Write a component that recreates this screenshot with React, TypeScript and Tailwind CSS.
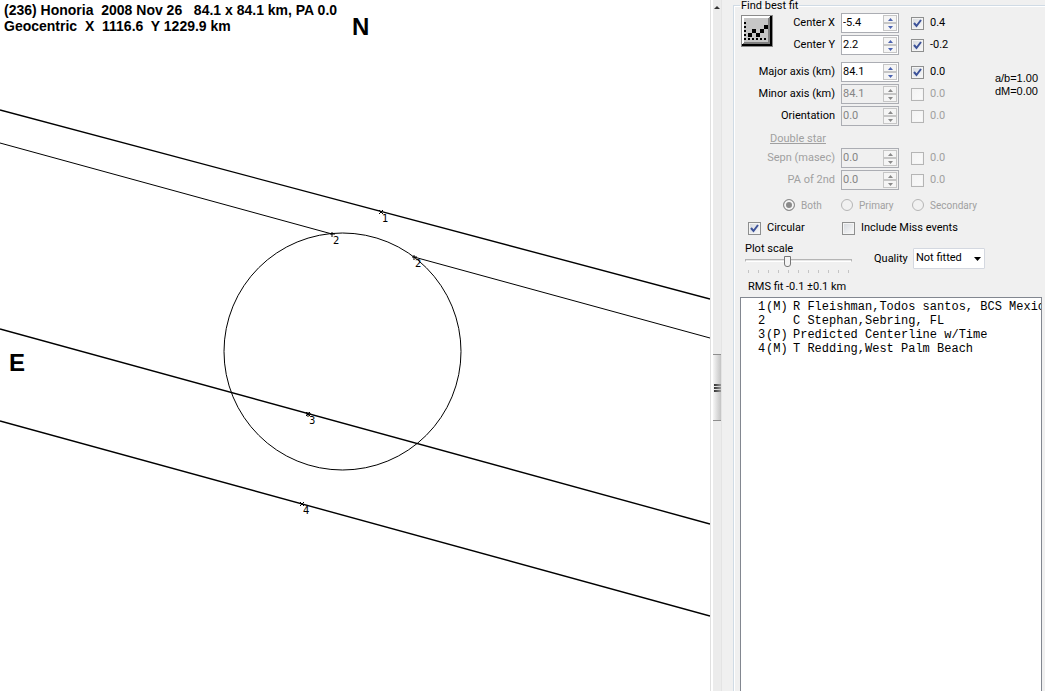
import type { ReactNode } from "react";

const stations = [
  { id: 1, code: "(M)", name: "R Fleishman,Todos santos, BCS Mexico" },
  { id: 2, code: "", name: "C Stephan,Sebring, FL" },
  { id: 3, code: "(P)", name: "Predicted Centerline w/Time" },
  { id: 4, code: "(M)", name: "T Redding,West Palm Beach" },
];

const chords = [
  { x1: 0, y1: 110, x2: 710, y2: 299, width: 1.4 },
  { x1: 0, y1: 143, x2: 332, y2: 234, width: 1 },
  { x1: 414, y1: 257, x2: 710, y2: 338, width: 1 },
  { x1: 0, y1: 329, x2: 710, y2: 524, width: 1.4 },
  { x1: 0, y1: 421, x2: 710, y2: 616, width: 1.4 },
];

const markers = [
  { x: 381, y: 212, label: "1", d: "M-2 -2L2 2M-2 2L2 -2" },
  { x: 332, y: 234, label: "2", d: "M-2 0H3M0 -2V3" },
  { x: 414, y: 257, label: "2", d: "M-2 0H3M0 -2V3" },
  { x: 308, y: 414, label: "3", d: "M-2 -2L2 2M-2 2L2 -2M-2 0H3M0 -2V3" },
  { x: 302, y: 504, label: "4", d: "M-2 -2L2 2M-2 2L2 -2" },
];

function Plot() {
  return (
    <main className="relative min-w-0 flex-1 overflow-hidden bg-white">
      <svg
        className="block h-full w-full"
        viewBox="0 0 710 691"
        preserveAspectRatio="xMinYMin slice"
        fill="none"
        stroke="#000"
      >
        {chords.map((c) => (
          <line key={c.y1} x1={c.x1} y1={c.y1} x2={c.x2} y2={c.y2} strokeWidth={c.width} />
        ))}
        <circle cx="342.5" cy="351.5" r="118.5" />
        {markers.map((m) => (
          <g key={`${m.x}-${m.label}`} transform={`translate(${m.x} ${m.y})`}>
            <path d={m.d} />
            <text x="1" y="10" fill="#000" stroke="none" fontSize="10" fontFamily="DejaVu Sans, sans-serif">
              {m.label}
            </text>
          </g>
        ))}
      </svg>
      <h1 className="absolute top-[2px] left-1 text-[14px] leading-4 font-bold whitespace-pre">
        {"(236) Honoria  2008 Nov 26   84.1 x 84.1 km, PA 0.0\nGeocentric  X  1116.6  Y 1229.9 km"}
      </h1>
      <span className="absolute top-[15px] left-[352px] text-2xl leading-6 font-bold">N</span>
      <span className="absolute top-[351px] left-[9px] text-2xl leading-6 font-bold">E</span>
    </main>
  );
}

function Splitter() {
  return (
    <div className="flex w-[12px] shrink-0 flex-col border-r border-l border-r-[#e4e4e4] border-l-[#e0e0e0] bg-[#ececec] pl-[2px] shadow-[inset_2px_0_0_#fff]">
      <button type="button" aria-label="Scroll up" className="flex h-[14px] items-center justify-center">
        <svg width="6" height="3" viewBox="0 0 6 3" fill="#333">
          <path d="M0 3L3 0L6 3Z" />
        </svg>
      </button>
      <div className="flex-[340]" />
      <div className="flex h-[67px] flex-col items-center justify-center gap-px border-y border-[#8e8e8e] bg-linear-to-r from-[#f6f6f6] to-[#c4c4c4]">
        <i className="h-[2px] w-[7px] bg-linear-to-r from-[#333] to-[#999]" />
        <i className="h-[2px] w-[7px] bg-linear-to-r from-[#333] to-[#999]" />
        <i className="h-[2px] w-[7px] bg-linear-to-r from-[#333] to-[#999]" />
      </div>
      <div className="flex-[270]" />
    </div>
  );
}

function Spinner({ id, value, disabled }: { id: string; value: string; disabled?: boolean }) {
  const fill = disabled ? "#8a8a8a" : "#4a62b0";
  const step = "flex flex-1 items-center justify-center border border-[#c6c6c6] bg-[#f5f5f5]";
  return (
    <div
      className={`flex h-5 w-[58px] border border-[#abadb3] p-px ${disabled ? "bg-[#f0f0f0]" : "bg-white"}`}
    >
      <input
        id={id}
        type="text"
        defaultValue={value}
        disabled={disabled}
        className="h-4 w-0 min-w-0 flex-1 leading-4 outline-none disabled:text-[#858585]"
      />
      <div className="flex w-[14px] flex-col">
        <button type="button" aria-label="Increase" disabled={disabled} className={step}>
          <svg width="5" height="3" viewBox="0 0 5 3" fill={fill}>
            <path d="M0 3L2.5 0L5 3Z" />
          </svg>
        </button>
        <button type="button" aria-label="Decrease" disabled={disabled} className={step}>
          <svg width="5" height="3" viewBox="0 0 5 3" fill={fill}>
            <path d="M0 0H5L2.5 3Z" />
          </svg>
        </button>
      </div>
    </div>
  );
}

function Check({ children, checked, disabled }: {
  children: ReactNode;
  checked?: boolean;
  disabled?: boolean;
}) {
  return (
    <label className={`flex items-center gap-[6px] ${disabled ? "text-[#a0a0a0]" : ""}`}>
      <span className="grid place-items-center">
        <input
          type="checkbox"
          defaultChecked={checked}
          disabled={disabled}
          className="peer col-start-1 row-start-1 size-[13px] appearance-none border border-[#8e8f8f] bg-linear-to-br from-[#d5d9de] to-[#fafafa] shadow-[inset_0_0_0_1px_#f4f4f4] disabled:border-[#b5b5b5] disabled:from-[#f3f3f3]"
        />
        <svg
          className="pointer-events-none invisible col-start-1 row-start-1 peer-checked:visible"
          width="9"
          height="9"
          viewBox="0 0 9 9"
          fill="none"
          stroke="#3c5299"
          strokeWidth="2"
        >
          <path d="M1 4L3.5 7L8 1" />
        </svg>
      </span>
      {children}
    </label>
  );
}

function FitRow({ id, label, value, delta, checked, disabled, muted }: {
  id: string;
  label: string;
  value: string;
  delta: string;
  checked?: boolean;
  disabled?: boolean;
  muted?: boolean;
}) {
  return (
    <div className="flex items-center">
      <label htmlFor={id} className={`flex-1 pr-[6px] text-right whitespace-nowrap ${muted ? "text-[#a0a0a0]" : ""}`}>
        {label}
      </label>
      <Spinner id={id} value={value} disabled={disabled} />
      <div className="w-[60px] pl-3">
        <Check checked={checked} disabled={disabled}>
          {delta}
        </Check>
      </div>
    </div>
  );
}

function Radio({ label, checked }: { label: string; checked?: boolean }) {
  return (
    <label className="flex items-center gap-[6px]">
      <input
        type="radio"
        name="component"
        defaultChecked={checked}
        disabled
        className="size-3 appearance-none rounded-full border border-[#b5b5b5] bg-[#f1f1f1] checked:border-[#8e8e8e] checked:bg-[#8a8a8a] checked:shadow-[inset_0_0_0_2px_#f4f4f4]"
      />
      {label}
    </label>
  );
}

function FitButton() {
  return (
    <button type="button" aria-label="Find best fit" className="mt-[2px] size-8 shrink-0">
      <svg width="32" height="32" viewBox="0 0 32 32" shapeRendering="crispEdges">
        <path d="M0 0H32V32H0Z" fill="#8a8a8a" />
        <path d="M1 1H31V31H1Z" fill="#000" />
        <path d="M1 1H29V29H1Z" fill="#808080" />
        <path d="M1 1H29L27 3H3V27L1 29Z" fill="#fff" />
        <path d="M3 3H27V27H3Z" fill="#c6c6c6" />
        {[7, 11, 15, 19, 23].map((y) => (
          <path key={y} d={`M3 ${y}h2v2h-2z`} />
        ))}
        {[7, 11, 15, 19, 23].map((x) => (
          <path key={x} d={`M${x} 23h2v2h-2z`} />
        ))}
        <path d="M7 18h4v4h-4zM11 14h4v4h-4zM15 18h4v4h-4zM19 14h4v4h-4zM23 10h4v4h-4z" />
      </svg>
    </button>
  );
}

function FitPanel() {
  return (
    <fieldset className="flex min-w-0 flex-1 flex-col border-t border-l border-[#d0dbe5] pr-[3px] pl-[6px] shadow-[inset_1px_1px_0_#fff]">
      <legend className="h-[11px] px-px leading-[11px]">Find best fit</legend>

      <div className="mt-[2px] flex w-[219px] pl-px">
        <FitButton />
        <div className="flex flex-1 flex-col gap-[2px]">
          <FitRow id="cx" label="Center X" value="-5.4" delta="0.4" checked />
          <FitRow id="cy" label="Center Y" value="2.2" delta="-0.2" checked />
        </div>
      </div>

      <div className="mt-[7px] flex justify-between">
        <div className="flex w-[219px] flex-col gap-[2px]">
          <FitRow id="major" label="Major axis (km)" value="84.1" delta="0.0" checked />
          <FitRow id="minor" label="Minor axis (km)" value="84.1" delta="0.0" disabled />
          <FitRow id="orientation" label="Orientation" value="0.0" delta="0.0" disabled />
        </div>
        <p className="mt-[10px] mr-1 text-right font-['Liberation_Sans',Arial,sans-serif] text-[11px] leading-[13px]">
          a/b=1.00
          <br />
          dM=0.00
        </p>
      </div>

      <h2 className="mt-[5px] pl-[30px] leading-4 text-[#a0a0a0] underline">Double star</h2>
      <div className="mt-px flex w-[219px] flex-col gap-[2px]">
        <FitRow id="sepn" label="Sepn (masec)" value="0.0" delta="0.0" disabled muted />
        <FitRow id="pa2" label="PA of 2nd" value="0.0" delta="0.0" disabled muted />
      </div>

      <div className="mt-[7px] grid h-4 grid-cols-[58px_71px_auto] pl-[43px] text-[10px] text-[#a0a0a0]">
        <Radio label="Both" checked />
        <Radio label="Primary" />
        <Radio label="Secondary" />
      </div>

      <div className="mt-[7px] grid h-4 grid-cols-[94px_auto] pl-2">
        <Check checked>Circular</Check>
        <Check>Include Miss events</Check>
      </div>

      <div className="mt-[5px] flex items-start">
        <div className="flex w-[117px] flex-col pl-[5px]">
          <label htmlFor="scale" className="leading-4">
            Plot scale
          </label>
          <input
            id="scale"
            type="range"
            min="0"
            max="100"
            defaultValue="39"
            className="-mt-[2px] h-[11px] w-[107px] appearance-none bg-transparent [&::-webkit-slider-runnable-track]:h-[3px] [&::-webkit-slider-runnable-track]:border [&::-webkit-slider-runnable-track]:border-[#b5b5b5] [&::-webkit-slider-runnable-track]:border-b-white [&::-webkit-slider-runnable-track]:bg-[#e7e7e7] [&::-webkit-slider-thumb]:-mt-[4px] [&::-webkit-slider-thumb]:h-[11px] [&::-webkit-slider-thumb]:w-[7px] [&::-webkit-slider-thumb]:appearance-none [&::-webkit-slider-thumb]:rounded-b-[3px] [&::-webkit-slider-thumb]:border [&::-webkit-slider-thumb]:border-[#777] [&::-webkit-slider-thumb]:bg-[#f3f3f3]"
          />
          <div className="mt-1 flex w-[107px] justify-between px-[3px]">
            {Array.from({ length: 11 }, (_, i) => (
              <i key={i} className="h-[3px] w-px bg-[#c4c4c4]" />
            ))}
          </div>
        </div>
        <label htmlFor="quality" className="mt-[10px] ml-[17px] w-[39px] leading-4">
          Quality
        </label>
        <div className="mt-[7px] grid w-[72px] items-center">
          <select
            id="quality"
            className="col-start-1 row-start-1 h-[21px] appearance-none rounded-[1px] border border-[#d4d8e0] bg-white pl-[2px]"
          >
            <option>Not fitted</option>
          </select>
          <svg className="pointer-events-none col-start-1 row-start-1 mr-1 justify-self-end" width="7" height="4" viewBox="0 0 7 4">
            <path d="M0 0H7L3.5 4Z" />
          </svg>
        </div>
      </div>

      <p className="mt-[6px] pl-2 leading-4">RMS fit -0.1 ±0.1 km</p>

      <ul className="mt-[2px] flex-1 overflow-hidden border border-b-0 border-[#828790] bg-white pt-[2px] pl-[17px] font-['Liberation_Mono',monospace] text-[12px] leading-[14px]">
        {stations.map((s) => (
          <li key={s.id} className="flex whitespace-nowrap">
            <span className="w-2 shrink-0">{s.id}</span>
            <span className="w-[27px] shrink-0">{s.code}</span>
            <span>{s.name}</span>
          </li>
        ))}
      </ul>
    </fieldset>
  );
}

export default function App() {
  return (
    <div className="flex h-screen min-h-[480px] bg-[#f0f0f0] font-['Liberation_Sans',Arial,sans-serif] text-black">
      <Plot />
      <aside className="flex w-[335px] shrink-0 font-[Roboto,sans-serif] text-[11px]">
        <Splitter />
        <div className="flex min-w-0 flex-1 pl-[11px]">
          <FitPanel />
        </div>
      </aside>
    </div>
  );
}
